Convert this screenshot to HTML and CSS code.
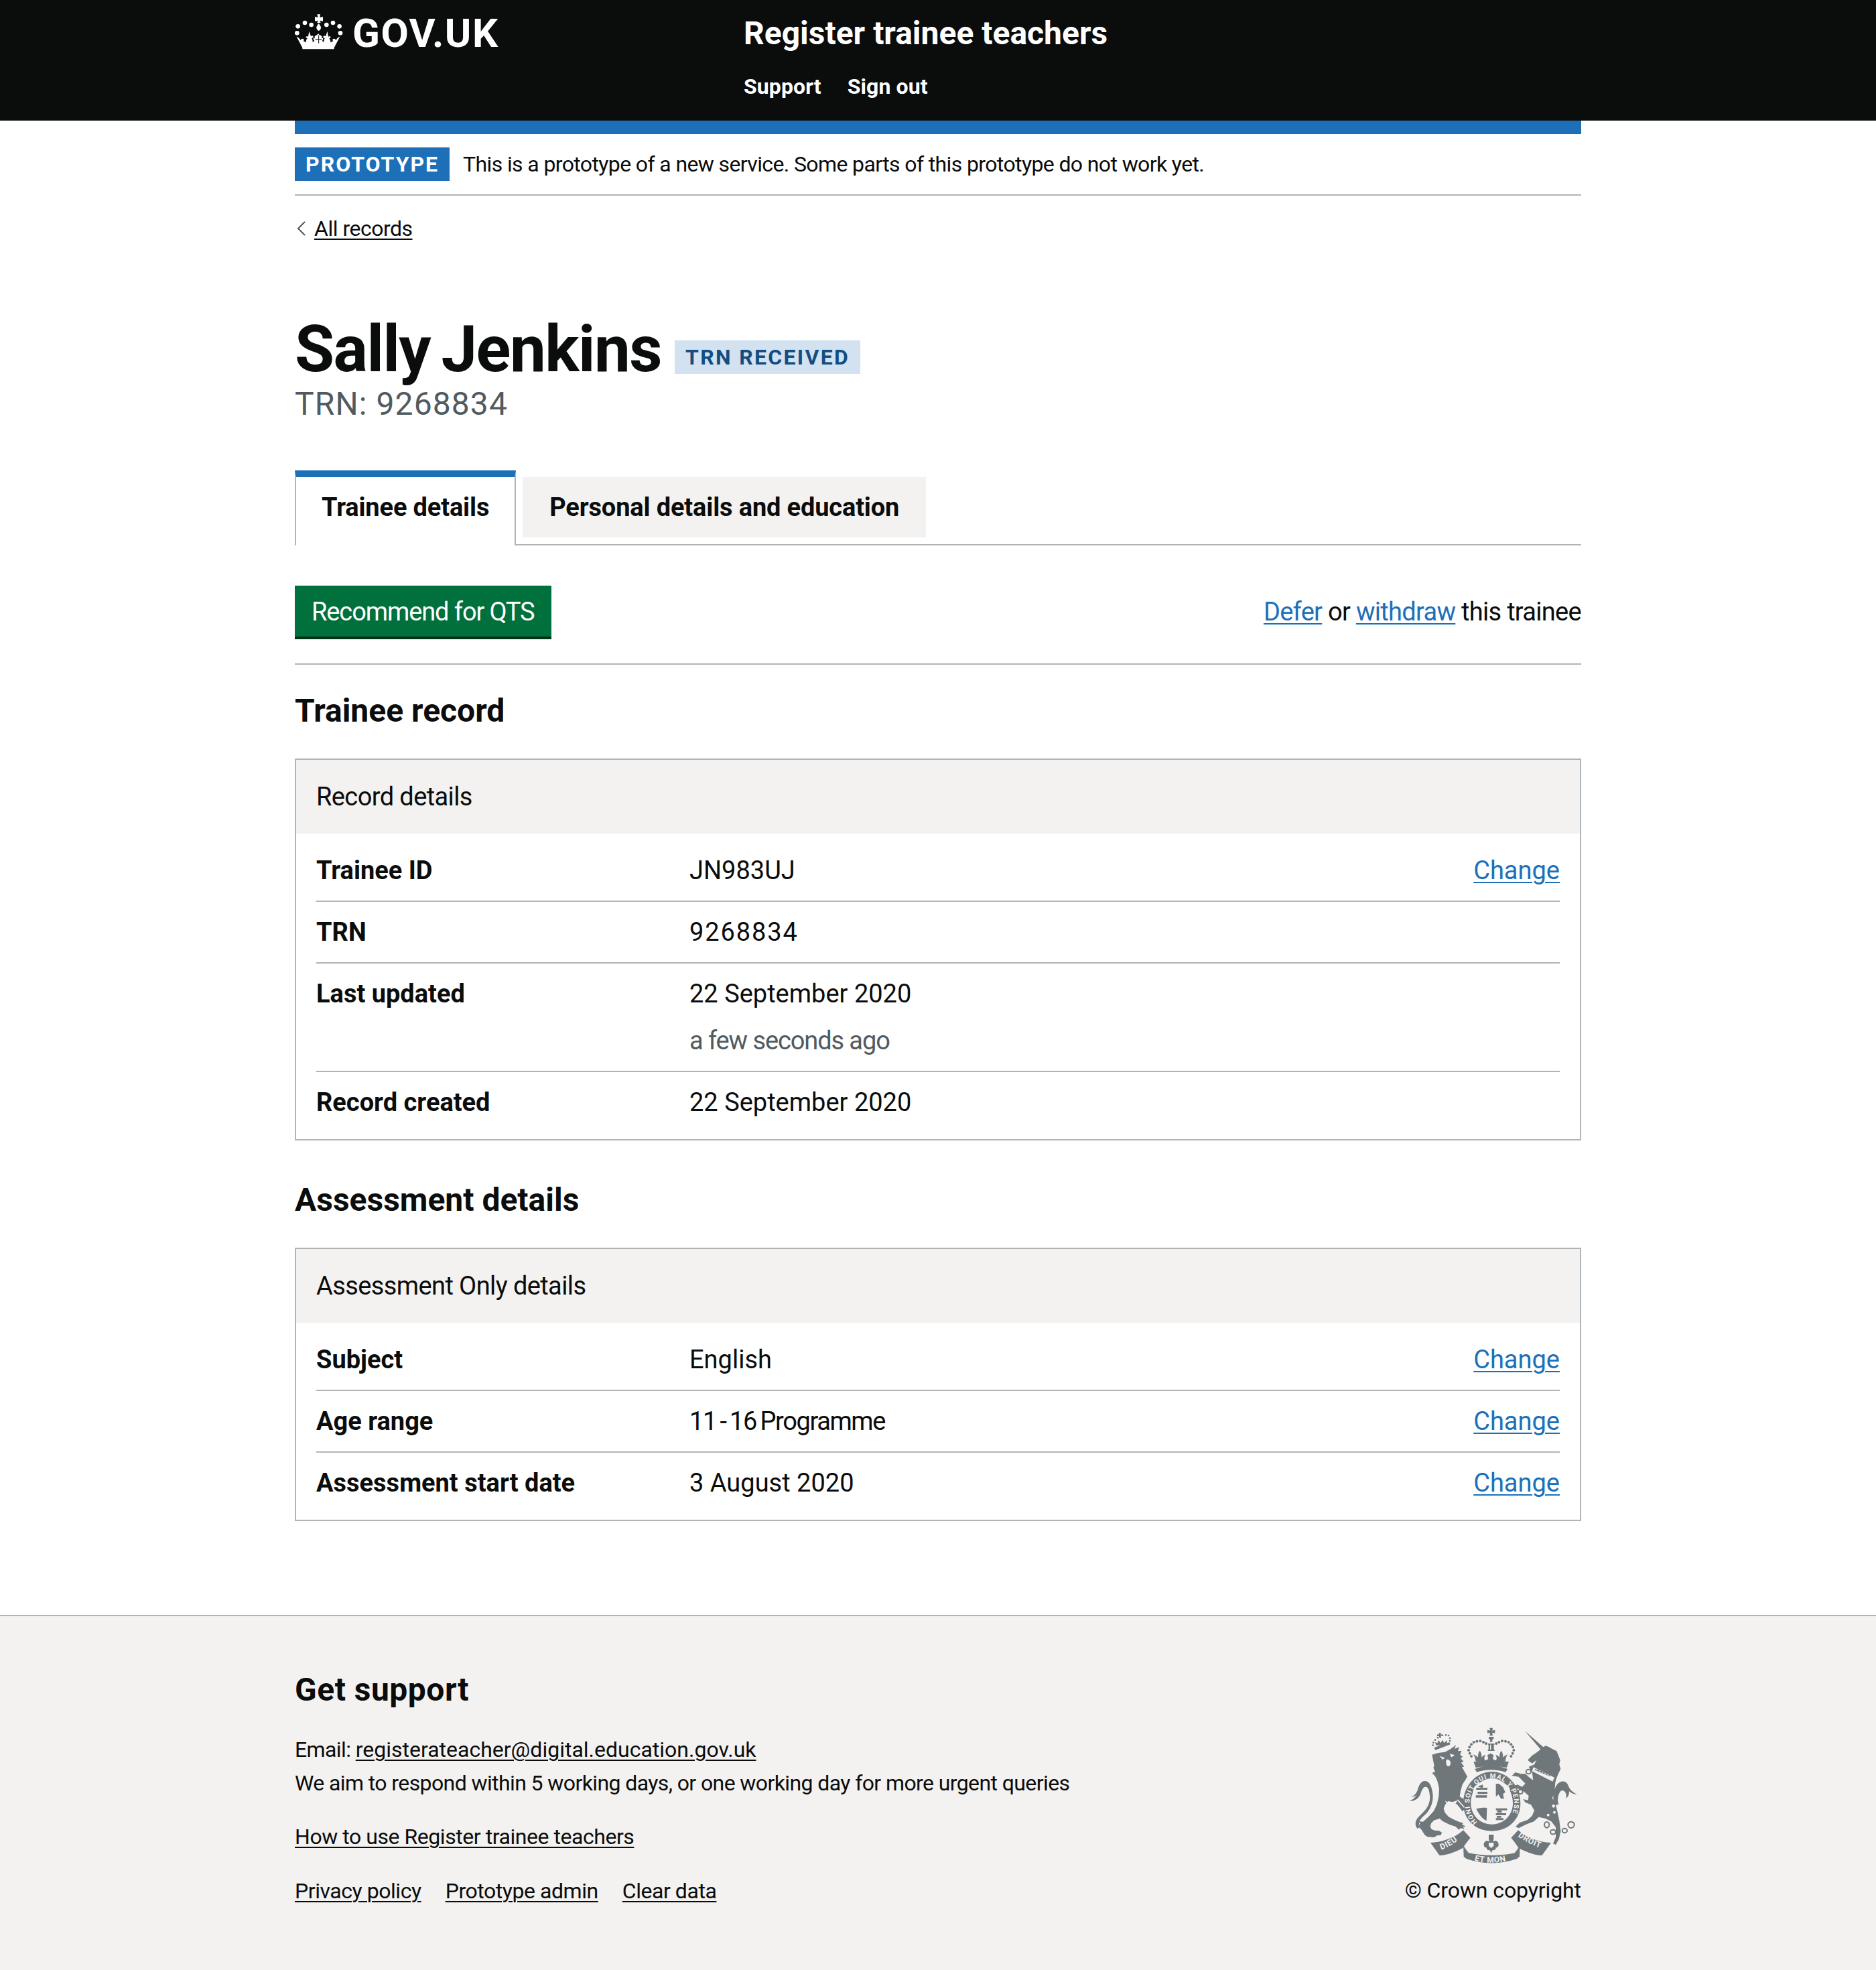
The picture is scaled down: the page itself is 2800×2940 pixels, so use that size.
FILE: index.html
```html
<!DOCTYPE html>
<html lang="en">
<head>
    <meta charset="UTF-8">
    <meta name="viewport" content="width=device-width, initial-scale=1.0">
    <title>Sally Jenkins - Register trainee teachers</title>
    <link rel="stylesheet" href="styles.css">
</head>
<body>

    <header class="site-header">
        <div class="site-header-inner">
            <a class="logo" href="#">
                <svg class="crown" viewBox="30 30 216 162" aria-hidden="true">
                    <g fill="#fff">
                        <circle cx="44" cy="88" r="10"/><circle cx="75" cy="72" r="10"/><circle cx="104" cy="81" r="10"/>
                        <circle cx="172" cy="81" r="10"/><circle cx="201" cy="72" r="10"/><circle cx="230" cy="88" r="10"/>
                        <circle cx="40" cy="118" r="10"/><circle cx="234" cy="118" r="10"/>
                        <path d="M130 34h14l-2 14 14-3v20l-14-3 4 10h-16l4-10-14 3V45l14 3z"/>
                        <path d="M137 74c6 8 10 14 10 20 0 6-4 12-10 14-6-2-10-8-10-14 0-6 4-12 10-20z"/>
                        <path d="M38 134c8 2 14 8 18 16 2-6 8-8 12-6 4 2 4 8 0 10l12 6c0-8 2-14 6-18l-8-6 6-4 6 2 4-24 8 22 8-2 4 6-8 6c4 6 4 12 4 18l8-8c-4-2-6-8-4-12l6 2-2-8 6-6 8-2-2-4 10 0-2 4 8 2 6 6-2 8 6-2c2 4 0 10-4 12l8 8c0-6 0-12 4-18l-8-6 4-6 8 2 8-22 4 24 6-2 6 4-8 6c4 4 6 10 6 18l12-6c-4-2-4-8 0-10 4-2 10 0 12 6 4-8 10-14 18-16l-26 50v6H64v-6z"/>
                    </g>
                    <path d="M137 128v36M122 146h30" fill="none" stroke="#0b0c0c" stroke-width="3"/>
                </svg>
                <span class="logo-text">GOV.UK</span>
            </a>
            <div class="service">
                <a class="service-name" href="#">Register trainee teachers</a>
                <nav class="service-nav">
                    <a href="#">Support</a>
                    <a href="#">Sign out</a>
                </nav>
            </div>
        </div>
    </header>

    <div class="container">
        <div class="phase-bar"></div>
        <div class="phase-banner">
            <strong class="phase-tag">PROTOTYPE</strong>
            <span class="phase-text">This is a prototype of a new service. Some parts of this prototype do not work yet.</span>
        </div>

        <a class="back-link" href="#">
            <svg class="chevron" viewBox="0 0 14 22" aria-hidden="true"><path d="M12 1L2 11l10 10" fill="none" stroke="#505a5f" stroke-width="2"/></svg>
            <span>All records</span>
        </a>

        <main>
            <div class="title-row">
                <h1 class="title">Sally Jenkins</h1>
                <strong class="status-tag">TRN RECEIVED</strong>
            </div>
            <p class="caption">TRN: 9268834</p>

            <div class="tabs">
                <a class="tab tab-selected" href="#">Trainee details</a>
                <a class="tab" href="#">Personal details and education</a>
            </div>

            <div class="actions">
                <a class="button" href="#">Recommend for QTS</a>
                <p class="actions-text"><a href="#">Defer</a> or <a href="#">withdraw</a> this trainee</p>
            </div>

            <h2 class="section-title">Trainee record</h2>
            <section class="card">
                <h3 class="card-title">Record details</h3>
                <dl class="summary">
                    <div class="summary-row">
                        <dt>Trainee ID</dt>
                        <dd>JN983UJ</dd>
                        <dd class="summary-action"><a href="#">Change</a></dd>
                    </div>
                    <div class="summary-row">
                        <dt>TRN</dt>
                        <dd class="summary-digits">9268834</dd>
                    </div>
                    <div class="summary-row">
                        <dt>Last updated</dt>
                        <dd>22 September 2020<span class="hint">a few seconds ago</span></dd>
                    </div>
                    <div class="summary-row">
                        <dt>Record created</dt>
                        <dd>22 September 2020</dd>
                    </div>
                </dl>
            </section>

            <h2 class="section-title section-title-next">Assessment details</h2>
            <section class="card">
                <h3 class="card-title">Assessment Only details</h3>
                <dl class="summary">
                    <div class="summary-row">
                        <dt>Subject</dt>
                        <dd>English</dd>
                        <dd class="summary-action"><a href="#">Change</a></dd>
                    </div>
                    <div class="summary-row">
                        <dt>Age range</dt>
                        <dd class="summary-tight">11 - 16 Programme</dd>
                        <dd class="summary-action"><a href="#">Change</a></dd>
                    </div>
                    <div class="summary-row">
                        <dt>Assessment start date</dt>
                        <dd>3 August 2020</dd>
                        <dd class="summary-action"><a href="#">Change</a></dd>
                    </div>
                </dl>
            </section>
        </main>
    </div>

    <footer class="site-footer">
        <div class="footer-inner">
            <div class="footer-main">
                <h2 class="footer-title">Get support</h2>
                <p class="footer-contact">Email: <a href="#">registerateacher@digital.education.gov.uk</a><br>We aim to respond within 5 working days, or one working day for more urgent queries</p>
                <p class="footer-guide"><a href="#">How to use Register trainee teachers</a></p>
                <ul class="footer-links">
                    <li><a href="#">Privacy policy</a></li>
                    <li><a href="#">Prototype admin</a></li>
                    <li><a href="#">Clear data</a></li>
                </ul>
            </div>
            <div class="footer-crest">
                <svg class="crest" viewBox="0 0 810 660" aria-hidden="true">
                    <defs>
                        <path id="garter" d="M345 448A100 112 0 1 1 475 448"/>
                        <path id="ribbonLeft" d="M184 572C222 558 256 534 284 504"/>
                        <path id="ribbonMid" d="M322 616C370 634 445 634 498 614"/>
                        <path id="ribbonRight" d="M526 512C560 535 600 558 640 566"/>
                    </defs>
                    <g fill="#6f777b">
                        <!-- lion -->
                        <path d="M142 146l28-8 30-4 26-14 24-18-8 18 22-8-6 18 16-2-6 18 12 10-10 6 14 16-12 2 14 20-10 2 14 24 10 18-8 14-14 22-8 28-4 26 14 8 14 18 12-6-4 14 4 20-10-2 2 12-12-6-8 8-14-20-10-12-20-10-20-4-12 14-8 18 6 20 16 18 22 12 24 10 20 6-6 6 18 10-14 0 8 12-16-6-10 8-14-14-26-8-32-16-14-12-26 8-12 14-4 14 6 12 16 6 16 0 14 8-4 12-18 2-12 8-30-2-12-8-14-22-14-18 6-12-4-10 18 2 26-24 22-24 14-30 8-36 2-34-8-34-10-22-14-14 14-6-8-18 4-8z"/>
                        <path d="M88 478c-6-12-6-20-2-30-2-8 12-22 26-34 24-22 40-62 32-102-6-30-14-46-32-48-22-2-30 24-36 44-6 14-16 22-28 28 12-2 20-4 26-10-8 12-18 20-32 28 20 0 36-8 46-26 6-16 12-40 26-38 12 0 16 18 18 38 4 30-10 58-30 76-18 18-34 30-34 52 0 8 4 16 10 22 4-8 8-4 10 2z"/>
                        <circle cx="148" cy="92" r="4"/><circle cx="146" cy="104" r="4"/><circle cx="156" cy="80" r="4"/><circle cx="168" cy="70" r="4"/><circle cx="204" cy="58" r="4"/><circle cx="216" cy="60" r="4"/><circle cx="222" cy="72" r="4"/><circle cx="222" cy="84" r="4"/><circle cx="190" cy="60" r="3"/><circle cx="174" cy="60" r="3"/>
                        <path d="M152 114l68-24 4 10-68 26zM175 70l-2-8-8 2 0-9 8 1 0-8 9 0-1 8 8-2 0 9-8-2 2 10zM160 104l-4-14 10 4 6-14 8 14 10-14 6 14 12-12 2 14-12 4-16 4z"/>
                        <!-- centre crown -->
                        <path d="M400 26h14l-2 12 12-3v15l-12-3 2 14h-14l2-14-12 3V35l12 3zM396 66h22v8l-6 5v10h-10V79l-6-5z"/>
                        <path d="M392 96h30v5h-3v23h3v5h-30v-5h3v-23h-3zM402 101v23h4v-23z"/>
                        <path d="M328 178c54-8 106-8 158 0l-10 26c-44-8-94-8-138 0z"/>
                        <path d="M338 176c-2-12-4-24-12-32 8 4 16 8 22 14 0-10 0-18 8-30 8 10 8 20 8 30 4-6 10-10 18-12-6 10-8 18-2 26l14-6-4-18 14-8 14 8-4 18 14 6c6-8 4-16-2-26 8 2 14 6 18 12 0-10 0-20 8-30 8 12 8 20 8 30 6-6 14-10 22-14-8 8-10 20-12 32z"/>
                        <path d="M334 210c50-20 98-20 146 0l-8 14c-42-14-88-14-130 0z"/>
                        <circle cx="384" cy="96" r="6"/><circle cx="372" cy="90" r="6"/><circle cx="358" cy="85" r="6"/><circle cx="343" cy="86" r="6"/><circle cx="329" cy="90" r="6"/><circle cx="318" cy="100" r="6"/><circle cx="310" cy="112" r="6"/><circle cx="306" cy="126" r="6"/><circle cx="311" cy="140" r="6"/><circle cx="318" cy="153" r="6"/>
                        <circle cx="430" cy="96" r="6"/><circle cx="442" cy="90" r="6"/><circle cx="456" cy="85" r="6"/><circle cx="471" cy="86" r="6"/><circle cx="485" cy="90" r="6"/><circle cx="496" cy="100" r="6"/><circle cx="504" cy="112" r="6"/><circle cx="508" cy="126" r="6"/><circle cx="503" cy="140" r="6"/><circle cx="496" cy="153" r="6"/>
                        <!-- unicorn -->
                        <path d="M558 40L640 112 652 106 666 112 680 120 700 130 708 150 716 170 712 190 718 210 706 235 700 250 694 270 690 320 680 340 695 365 703 400 712 440 718 490 710 525 696 550 684 544 696 515 696 470 676 445 650 432 620 425 598 445 560 460 530 475 516 468 535 450 570 438 590 420 600 395 585 370 560 360 550 345 572 350 575 330 552 310 520 295 510 285 525 280 545 290 560 275 530 245 500 240 515 225 540 232 560 232 580 250 595 260 590 225 575 200 600 190 610 170 590 185 570 170 590 150 612 135 628 122z"/>
                        <path d="M692 372c-14-30-6-72 10-92 14-20 42-20 50 4 6 16 16 28 40 40-16 0-28-6-36-14 0 12-2 24-14 32 4-14 0-28-10-34-14-8-22 10-26 30-2 12 0 22 4 30z"/>
                        <!-- garter and shield -->
                        <path fill-rule="evenodd" d="M410 222c70 0 128 64 128 142 0 70-52 124-128 124s-128-54-128-124c0-78 58-142 128-142zm0 30c-52 0-94 52-94 112 0 54 42 94 94 94s94-40 94-94c0-60-42-112-94-112z"/>
                        <path d="M330 292c20-20 44-32 70-36v96h-76c-2-20 0-40 6-60zM418 256c26 4 50 16 70 36 6 20 8 40 6 60h-76zM326 370h74v86c-36-10-64-40-74-86zM418 370h76c-10 46-40 76-76 86z" fill="#f3f2f1"/>
                        <path d="M340 294h50v9h-50zM346 288l24 8 0-16zM346 312h44v10h-44zM338 328h50v10h-50zM428 276l14 0 18 16 10 22-10 8 4 22-14-2-10-18-12 10zM428 386h50v9h-50zM428 408h46v9h-46zM428 430h34v9h-34zM434 396l20 0 0 10-20 0zM432 420l20 0 0 8-20 0z"/>
                        <path d="M340 388c16-4 34-6 48-4l-2 58c-18-8-34-28-46-54z"/>
                        <!-- motto ribbon -->
                        <path d="M135 540c50-2 108-20 147-56l32 34c-20 24-28 36-34 46-40 22-90 36-105 32z"/>
                        <path d="M282 552c8 12 16 24 24 34 60 14 148 14 206 0 8-10 16-22 24-34l-2 50-12 10c-70 26-156 26-226 0l-12-10z"/>
                        <path d="M675 540c-50-2-108-20-147-56l-32 34c20 24 28 36 34 46 40 22 90 36 105 32z"/>
                        <path d="M396 504h22v20l-4 10c14-6 26 0 26 14 0 10-6 14-12 14 0 10-8 14-14 10l-7 14-7-14c-6 4-14 0-14-10-6 0-12-4-12-14 0-14 12-20 26-14l-4-10z"/>
                    </g>
                    <g fill="#f3f2f1">
                        <path d="M176 152l24 8-10 8zM222 142l22 6-16 10zM207 168c8-2 16 4 18 12 2 10-4 18-10 18s-10-6-10-14c0-6 0-12 2-16z"/>
                        <path d="M200 352l14 26 24 22 6-30 14-20-20 6-14 10z"/>
                        <path d="M258 346l30 34-3 4-30-34z"/>
                        <path d="M596 202l94 46-8 18-92-46z"/>
                        <circle cx="574" cy="222" r="9"/><circle cx="538" cy="312" r="9"/><circle cx="686" cy="376" r="7"/><circle cx="690" cy="404" r="6"/><circle cx="662" cy="416" r="6"/>
                        <path d="M396 540h22v14l-11 10-11-10z"/>
                    </g>
                    <g fill="none" stroke="#6f777b" stroke-width="6">
                        <ellipse cx="574" cy="222" rx="11" ry="10"/><ellipse cx="538" cy="312" rx="10" ry="10"/>
                        <ellipse cx="656" cy="460" rx="11" ry="13"/><ellipse cx="684" cy="492" rx="12" ry="10"/><ellipse cx="736" cy="486" rx="11" ry="10"/><ellipse cx="765" cy="460" rx="14" ry="14"/>
                    </g>
                    <path d="M602 218l4-10 6 8 8-6 4 12 8-6 4 12 8-6 4 12 8-6 4 12 8-4 2 8-70-30z" fill="#6f777b"/>
                    <g class="crest-text">
                        <text class="crest-garter"><textPath href="#garter">HONI SOIT QUI MAL Y PENSE</textPath></text>
                        <text class="crest-motto"><textPath href="#ribbonLeft">DIEU</textPath></text>
                        <text class="crest-motto"><textPath href="#ribbonMid" startOffset="10">ET MON</textPath></text>
                        <text class="crest-motto"><textPath href="#ribbonRight">DROIT</textPath></text>
                    </g>
                </svg>
                <a class="copyright" href="#">© Crown copyright</a>
            </div>
        </div>
    </footer>

</body>
</html>
```

FILE: styles.css
```css
* {
    box-sizing: border-box;
}
body {
    margin: 0;
    background-color: #fff;
    color: #0b0c0c;
    font-family: Roboto, Arial, sans-serif;
    font-size: 38px;
    line-height: 50px;
}
p, h1, h2, h3, dl, dd, ul {
    margin: 0;
    padding: 0;
}
a {
    color: #1d70b8;
    text-decoration-thickness: 2px;
    text-underline-offset: 4px;
}

/* header */
.site-header {
    background-color: #0b0c0c;
    height: 180px;
}
.site-header-inner {
    width: 1920px;
    margin: 0 auto;
    display: flex;
}
.site-header a {
    color: #fff;
    text-decoration: none;
}
.logo {
    width: 670px;
    display: flex;
    align-items: flex-start;
    gap: 14px;
    padding-top: 20px;
}
.crown {
    width: 72px;
    height: 54px;
}
.logo-text {
    font-size: 60px;
    font-weight: 700;
    line-height: 60px;
    letter-spacing: 1.5px;
}
.service-name {
    display: block;
    font-size: 48px;
    font-weight: 700;
    line-height: 60px;
    padding-top: 20px;
}
.service-nav {
    display: flex;
    gap: 39px;
    font-size: 32px;
    font-weight: 700;
    line-height: 50px;
    margin-top: 24px;
    letter-spacing: .1px;
}

.container {
    width: 1920px;
    margin: 0 auto;
}

/* phase banner */
.phase-bar {
    height: 20px;
    background-color: #1d70b8;
}
.phase-banner {
    display: flex;
    align-items: center;
    gap: 20px;
    padding: 20px 0;
    border-bottom: 2px solid #b1b4b6;
    height: 92px;
}
.phase-tag {
    background-color: #1d70b8;
    color: #fff;
    font-size: 32px;
    letter-spacing: 2px;
    line-height: 50px;
    padding: 0 16px;
}
.phase-text {
    font-size: 32px;
    letter-spacing: -.62px;
}

.back-link {
    display: inline-flex;
    align-items: center;
    gap: 12px;
    color: #0b0c0c;
    font-size: 32px;
    line-height: 50px;
    margin: 24px 0 0 3px;
    letter-spacing: -.5px;
}
.chevron {
    width: 14px;
    height: 22px;
}

/* title */
main {
    display: block;
}
.title-row {
    display: flex;
    align-items: center;
    gap: 20px;
    margin-top: 105px;
}
.title {
    font-size: 96px;
    line-height: 100px;
    font-weight: 700;
    letter-spacing: -1.5px;
    word-spacing: -6px;
}
.status-tag {
    background-color: #d2e2f1;
    color: #144e81;
    font-size: 32px;
    letter-spacing: 2.3px;
    line-height: 50px;
    padding: 0 16px;
    margin-top: 24px;
}
.caption {
    color: #505a5f;
    font-size: 48px;
    line-height: 60px;
    margin-top: 2px;
    letter-spacing: 1.1px;
}

/* tabs */
.tabs {
    display: flex;
    align-items: flex-start;
    gap: 10px;
    height: 112px;
    margin-top: 69px;
    border-bottom: 2px solid #b1b4b6;
}
.tab {
    display: block;
    color: #0b0c0c;
    background-color: #f3f2f1;
    font-size: 38px;
    font-weight: 700;
    line-height: 50px;
    height: 90px;
    margin-top: 10px;
    padding: 20px 40px;
    text-decoration: none;
    letter-spacing: -.15px;
}
.tab-selected {
    background-color: #fff;
    height: 112px;
    margin-top: 0;
    padding: 20px 38px;
    border: 2px solid #b1b4b6;
    border-top: 10px solid #1d70b8;
    border-bottom: 0;
}

/* actions */
.actions {
    display: flex;
    justify-content: space-between;
    align-items: flex-start;
    margin-top: 60px;
    padding-bottom: 40px;
    border-bottom: 2px solid #b1b4b6;
}
.button {
    background-color: #00703c;
    color: #fff;
    height: 76px;
    padding: 14px 25px;
    box-shadow: 0 4px 0 #002d18;
    text-decoration: none;
    letter-spacing: -1.1px;
}
.actions-text {
    padding-top: 14px;
    letter-spacing: -.7px;
}

.section-title {
    font-size: 48px;
    font-weight: 700;
    line-height: 60px;
    margin-top: 39px;
}
.section-title-next {
    margin-top: 59px;
}

/* summary cards */
.card {
    border: 2px solid #b1b4b6;
    margin-top: 41px;
}
.card-title {
    background-color: #f3f2f1;
    font-weight: 400;
    font-size: 38px;
    line-height: 50px;
    padding: 30px;
    letter-spacing: -.6px;
}
.summary {
    padding: 10px 30px 30px;
}
.summary-row {
    display: flex;
    padding: 20px 0;
    border-bottom: 2px solid #b1b4b6;
}
.summary-row:last-child {
    border-bottom: 0;
    padding-bottom: 0;
}
.summary dt {
    width: 557px;
    font-weight: 700;
}
.summary dd {
    flex: 1;
}
.summary .summary-action {
    flex: none;
}
.summary .summary-digits {
    letter-spacing: 1.9px;
}
.summary .summary-tight {
    letter-spacing: -1.4px;
    word-spacing: -2.5px;
}
.hint {
    display: block;
    color: #505a5f;
    margin-top: 20px;
    letter-spacing: -1.1px;
}

/* footer */
.site-footer {
    background-color: #f3f2f1;
    border-top: 2px solid #b1b4b6;
    height: 530px;
    margin-top: 140px;
}
.footer-inner {
    width: 1920px;
    margin: 0 auto;
    display: flex;
    justify-content: space-between;
}
.site-footer a {
    color: #0b0c0c;
}
.footer-main {
    font-size: 32px;
    letter-spacing: -.45px;
}
.footer-title {
    font-size: 48px;
    font-weight: 700;
    line-height: 60px;
    margin-top: 80px;
    letter-spacing: .5px;
}
.footer-contact {
    margin-top: 34px;
    letter-spacing: -.6px;
}
.footer-contact a {
    letter-spacing: 0;
}
.footer-guide {
    margin-top: 30px;
}
.footer-links {
    display: flex;
    gap: 36px;
    list-style: none;
    margin-top: 31px;
}
.footer-crest {
    display: flex;
    flex-direction: column;
    align-items: flex-end;
    font-size: 32px;
}
.crest {
    display: block;
    width: 270px;
    height: 220px;
    margin: 158px 0 0 0;
}
.copyright {
    text-decoration: none;
    margin-top: 6px;
    letter-spacing: -.1px;
}
.crest-text {
    fill: #f3f2f1;
    font-weight: 700;
}
.crest-garter {
    font-size: 30px;
    letter-spacing: 3px;
}
.crest-motto {
    font-size: 36px;
    letter-spacing: 2px;
}
```
